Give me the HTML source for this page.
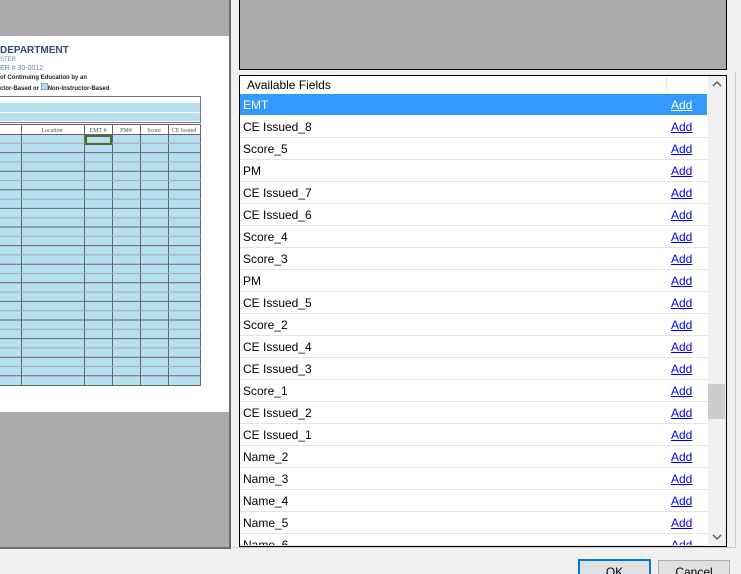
<!DOCTYPE html><html style="height:574px;overflow:hidden"><head><style>
body{margin:0;width:741px;height:574px;background:#f0f0f0;position:relative;overflow:hidden;font-family:"Liberation Sans",sans-serif}
.a{position:absolute}
.row{position:absolute;left:240px;width:467px;height:21px;border-bottom:1px solid #e3e3e3;font-size:12px;line-height:22px;background:#fff}
.row span{position:absolute;left:3px}
.row u{position:absolute;left:431px;color:#0000ff}
.sel{background:#3399ff;color:#fff}.sel u{color:#fff}
</style></head><body>
<div class="a" style="left:0;top:0;width:229px;height:547px;background:#ababab;border-right:2px solid #6d6d6d;border-bottom:2px solid #6d6d6d"></div>
<div class="a" style="left:0;top:36px;width:229px;height:376px;background:#fff"></div>
<div class="a" style="left:0;top:45px;font-size:10px;font-weight:bold;color:#2e4a7a">DEPARTMENT</div>
<div class="a" style="left:0;top:57px;font-size:6px;color:#6a86b0">STER</div>
<div class="a" style="left:0;top:65px;font-size:7px;color:#6a86b0">ER # 30-0012</div>
<div class="a" style="left:0;top:75px;font-size:6px;font-weight:bold;color:#222">of Continuing Education by an</div>
<div class="a" style="left:0;top:83px;font-size:6px;font-weight:bold;color:#222">ctor-Based or <span style="display:inline-block;width:5px;height:5px;background:#b6dff0;border:1px solid #8ab"></span>Non-Instructor-Based</div>
<div class="a" style="left:0;top:96px;width:200px;height:25px;border:1px solid #777;border-left:none;background:#fff"></div>
<div class="a" style="left:0;top:103px;width:200px;height:9px;background:#b6dff0"></div>
<div class="a" style="left:0;top:113px;width:200px;height:8px;background:#b6dff0"></div>
<svg class="a" style="left:0;top:124px" width="202" height="263">
<rect x="0" y="0" width="201" height="10" fill="#fff"/>
<rect x="0" y="10" width="201" height="252" fill="#b6dff0"/>
<g stroke="#666" stroke-width="1">
<line x1="0" y1="0.5" x2="201" y2="0.5"/><line x1="0" y1="10.5" x2="201" y2="10.5"/>
<line x1="21.5" y1="0" x2="21.5" y2="262"/><line x1="84.5" y1="0" x2="84.5" y2="262"/><line x1="112.5" y1="0" x2="112.5" y2="262"/><line x1="140.5" y1="0" x2="140.5" y2="262"/><line x1="168.5" y1="0" x2="168.5" y2="262"/><line x1="200.5" y1="0" x2="200.5" y2="262"/>
<line x1="0" y1="261.5" x2="201" y2="261.5"/>
</g>
<g stroke="#888" stroke-width="1" id="g"></g>
<text x="52" y="8" font-size="6" font-family="Liberation Serif" fill="#456" text-anchor="middle">Location</text>
<text x="98" y="8" font-size="6" font-family="Liberation Serif" fill="#456" text-anchor="middle">EMT #</text>
<text x="126" y="8" font-size="6" font-family="Liberation Serif" fill="#456" text-anchor="middle">PM#</text>
<text x="154" y="8" font-size="6" font-family="Liberation Serif" fill="#456" text-anchor="middle">Score</text>
<text x="184" y="8" font-size="6" font-family="Liberation Serif" fill="#456" text-anchor="middle">CE Issued</text>
<rect x="86" y="12" width="25" height="8" fill="none" stroke="#556b2f" stroke-width="2"/>
</svg>
<script>
var g=document.getElementById('g'),s='';for(var i=1;i<27;i++){var y=10+i*9.3;s+='<line x1="0" y1="'+y.toFixed(1)+'" x2="201" y2="'+y.toFixed(1)+'" stroke="'+(i%2?'#aaa':'#666')+'"/>';}g.innerHTML=s;
</script>
<div class="a" style="left:239px;top:0;width:486px;height:69px;background:#ababab;border:1px solid #000;border-top:none"></div>
<div class="a" style="left:232px;top:72px;width:503px;height:475px;border:1px solid #ccc;border-left:none;border-top:none"></div>
<div class="a" style="left:239px;top:75px;width:486px;height:470px;background:#fff;border:1px solid #000;overflow:hidden">
<div class="a" style="left:0;top:0;width:467px;height:18px;border-bottom:1px solid #e5e5e5;font-size:12px;line-height:19px"><span style="position:absolute;left:7px">Available Fields</span><span style="position:absolute;left:426px;top:0;height:18px;border-left:1px solid #e5e5e5"></span></div>
<div class="a" style="left:468px;top:0;width:18px;height:470px;background:#f0f0f0"></div>
<div class="a" style="left:468px;top:308px;width:17px;height:35px;background:#cdcdcd"></div>
<svg class="a" style="left:468px;top:0" width="18" height="18"><path d="M5 10 L9 6 L13 10" fill="none" stroke="#606060" stroke-width="1.5"/></svg>
<svg class="a" style="left:468px;top:452px" width="18" height="18"><path d="M5 7 L9 11 L13 7" fill="none" stroke="#606060" stroke-width="1.5"/></svg>
</div>
<div id="rows"></div>
<script>
var n=["EMT","CE Issued_8","Score_5","PM","CE Issued_7","CE Issued_6","Score_4","Score_3","PM","CE Issued_5","Score_2","CE Issued_4","CE Issued_3","Score_1","CE Issued_2","CE Issued_1","Name_2","Name_3","Name_4","Name_5","Name_6"],h='';
for(var i=0;i<n.length;i++){var t=94+i*22;var hh=Math.min(21,545-t);h+='<div class="row'+(i==0?' sel':'')+'" style="top:'+t+'px;height:'+hh+'px;overflow:hidden'+(i==0?';border-bottom-color:#fff':'')+'"><span>'+n[i]+'</span><u>Add</u></div>';}
document.getElementById('rows').innerHTML=h;
</script>
<div class="a" style="left:578px;top:559px;width:69px;height:20px;border:2px solid #0078d7;background:#e1e1e1;font-size:12px;text-align:center;line-height:22px">OK</div>
<div class="a" style="left:658px;top:560px;width:70px;height:20px;border:1px solid #adadad;background:#e1e1e1;font-size:12px;text-align:center;line-height:22px">Cancel</div>
</body></html>
